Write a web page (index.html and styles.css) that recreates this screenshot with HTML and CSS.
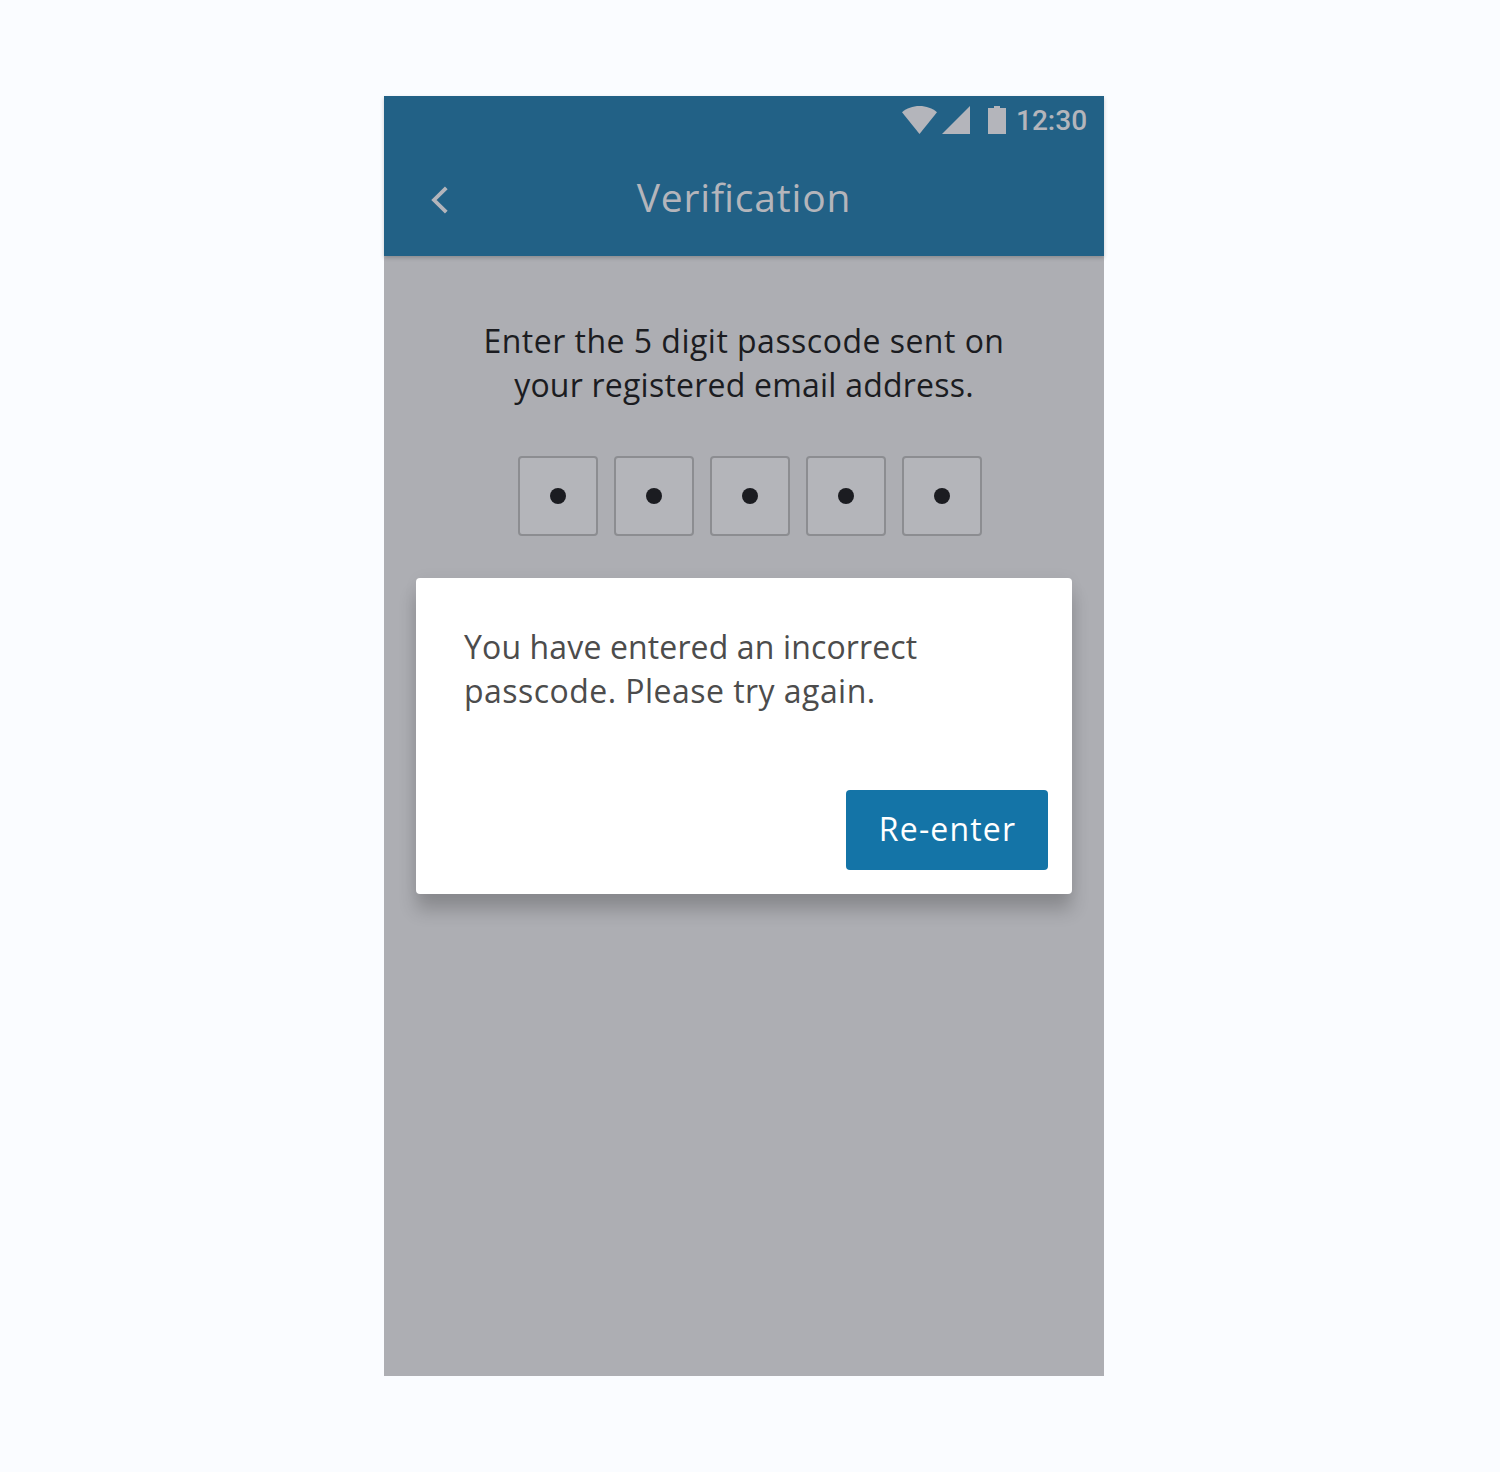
FILE: index.html
```html
<!DOCTYPE html>
<html lang="en">
<head>
<meta charset="utf-8">
<title>Verification</title>
<link rel="stylesheet" href="styles.css">
</head>
<body>
<main class="phone">
  <header class="header">
    <div class="status-bar">
      <svg class="status-icons" width="104" height="28" viewBox="0 0 104 28" aria-hidden="true">
        <path d="M0 6.2C4.600 2.300 10.700 0 17.500 0S30.400 2.300 35 6.200L17.500 28Z"/>
        <path d="M68 0V28H40Z"/>
        <path d="M86 2H92V0H98V2H104V28H86Z"/>
      </svg>
      <span class="clock">12:30</span>
    </div>
    <div class="app-bar">
      <button class="back" aria-label="Back">
        <svg width="18" height="28" viewBox="0 0 18 28"><path d="M15.300 1.900L3 14L15.300 26.100"/></svg>
      </button>
      <h1 class="title">Verification</h1>
    </div>
  </header>
  <section class="content">
    <p class="prompt"><span class="prompt-first">Enter the 5 digit passcode sent on</span><br><span class="prompt-second">your registered email address.</span></p>
    <div class="passcode">
      <span class="cell"></span>
      <span class="cell"></span>
      <span class="cell"></span>
      <span class="cell"></span>
      <span class="cell"></span>
    </div>
  </section>
  <div class="dialog" role="alertdialog">
    <p class="message"><span class="message-first">You have entered an incorrect</span><br><span class="message-second">passcode. Please try again.</span></p>
    <button class="action">Re-enter</button>
  </div>
</main>
</body>
</html>
```
FILE: styles.css
```css
* { box-sizing: border-box; }
body {
  margin: 0;
  min-height: 1472px;
  padding: 96px 0 0 384px;
  background: #fafcff;
  font-family: "Open Sans", "Noto Sans", sans-serif;
}
h1, p { margin: 0; }
button { padding: 0; border: 0; font: inherit; }
.phone {
  position: relative;
  width: 720px;
  height: 1280px;
  background: #adaeb3;
}
.header {
  height: 160px;
  background: #226186;
  box-shadow: 0 2px 4px rgba(0, 0, 0, .2);
}
.status-bar {
  display: flex;
  align-items: center;
  justify-content: flex-end;
  height: 48px;
  padding-right: 17px;
}
.status-icons { fill: #b4b5bb; }
.clock {
  width: 71px;
  margin-left: 10px;
  padding-top: 2px;
  color: #b4b5bb;
  font: 500 28px/48px Roboto, sans-serif;
  white-space: nowrap;
}
.app-bar {
  display: grid;
  grid-template-columns: 112px 1fr 112px;
  align-items: center;
  height: 112px;
}
.back {
  display: flex;
  margin-left: 47px;
  width: 18px;
  background: none;
}
.back path { fill: none; stroke: #b4b5bb; stroke-width: 3.8; }
.title {
  padding-bottom: 6px;
  color: #b4b5bb;
  font-size: 39px;
  font-weight: 400;
  line-height: 106px;
  text-align: center;
  letter-spacing: .85px;
  font-feature-settings: "liga" 1;
}
.content { padding-top: 63px; }
.prompt {
  color: #1b1c21;
  font-size: 32px;
  line-height: 44px;
  text-align: center;
  white-space: nowrap;
}
.prompt-first { letter-spacing: .48px; }
.prompt-second { letter-spacing: .22px; }
.passcode {
  display: flex;
  gap: 16px;
  margin-top: 49px;
  padding-left: 134px;
}
.cell {
  display: grid;
  place-items: center;
  width: 80px;
  height: 80px;
  border: 2px solid #8c8d91;
  border-radius: 4px;
  background: #b4b5ba;
}
.cell::before {
  content: "";
  width: 16px;
  height: 16px;
  border-radius: 50%;
  background: #1b1c21;
}
.dialog {
  position: absolute;
  top: 482px;
  left: 32px;
  display: flex;
  flex-direction: column;
  justify-content: space-between;
  width: 656px;
  height: 316px;
  padding: 47px 24px 24px;
  border-radius: 4px;
  background: #fff;
  box-shadow: 0 16px 18px rgba(0, 0, 0, .2), 0 0 16px rgba(0, 0, 0, .04);
}
.message {
  padding-left: 24px;
  color: #4c4c4c;
  font-size: 32px;
  line-height: 44px;
  white-space: nowrap;
}
.message-first { letter-spacing: .13px; }
.message-second { letter-spacing: .46px; }
.action {
  align-self: flex-end;
  width: 202px;
  height: 80px;
  padding: 0 0 2px 1px;
  border-radius: 4px;
  background: #1474a7;
  color: #fff;
  font-size: 32px;
  line-height: 76px;
  letter-spacing: 1.15px;
}
```
